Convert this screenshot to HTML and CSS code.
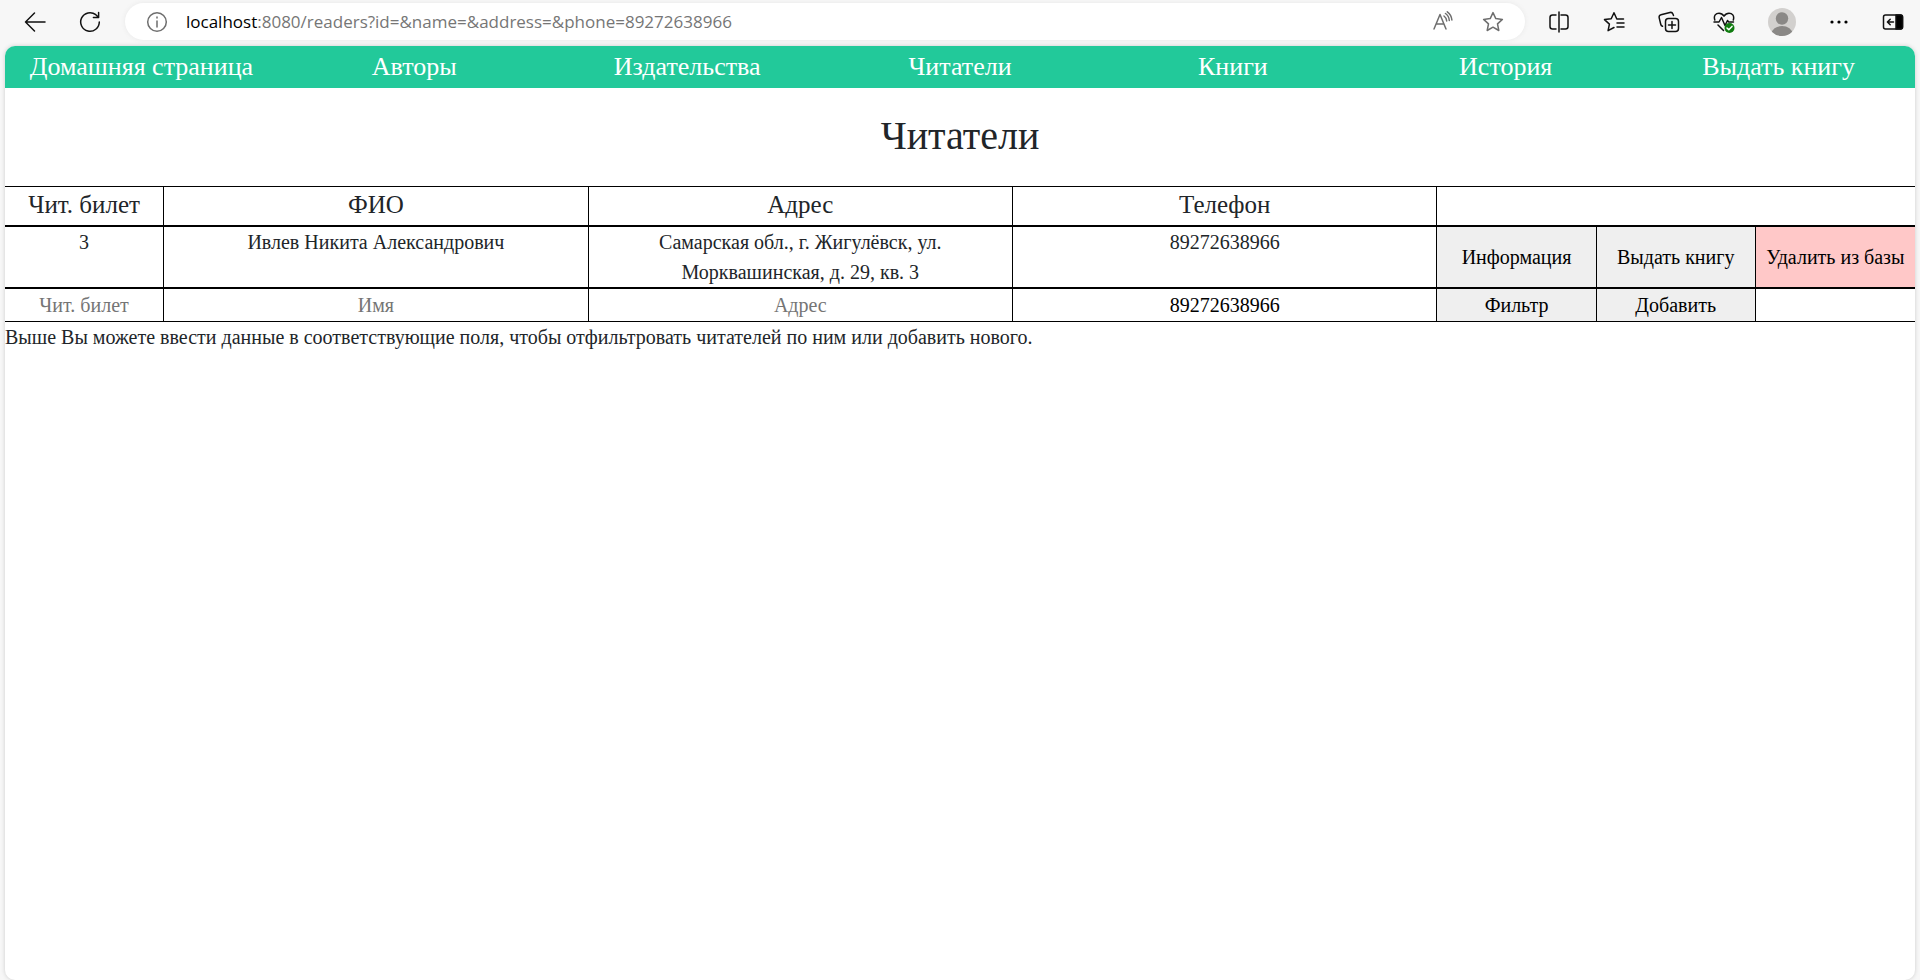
FILE: index.html
```html
<!DOCTYPE html>
<html lang="ru">
<head>
<meta charset="utf-8">
<title>Читатели</title>
<link rel="stylesheet" href="styles.css">
</head>
<body>
<header class="toolbar">
  <button class="tool tool-nav" type="button" aria-label="Назад">
    <svg class="icon" width="22" height="22" viewBox="0 0 22 22"><path d="M21 11H1.5M10.5 2L1.5 11l9 9"/></svg>
  </button>
  <button class="tool tool-nav" type="button" aria-label="Обновить">
    <svg class="icon" width="22" height="22" viewBox="0 0 22 22"><path d="M20.3 11A9.3 9.3 0 1 1 16.8 3.7L19.5 6.2M19.6 1.5V6.4H14.4"/></svg>
  </button>
  <form class="address">
    <button class="address-btn address-info" type="button" aria-label="Сведения о сайте">
      <svg class="icon icon-gray" width="22" height="22" viewBox="0 0 22 22"><circle cx="11" cy="11" r="9.3"/><path d="M11 10v6M11 6v1"/></svg>
    </button>
    <label class="address-host" for="url">localhost</label>
    <input class="address-url" id="url" type="text" value=":8080/readers?id=&amp;name=&amp;address=&amp;phone=89272638966">
    <button class="address-btn" type="button" aria-label="Прочесть вслух">
      <svg class="icon icon-gray" width="22" height="22" viewBox="0 0 22 22"><path d="M2 18L8 3.5 14 18M4.2 13h7.6M12 5c1.8 1.300 2.600 3 2.700 5M13.500 2.500c2.300 1.600 3.600 4 3.800 7M15.300.8c2.800 2 4.300 4.800 4.600 8.200"/></svg>
    </button>
    <button class="address-btn" type="button" aria-label="Добавить в избранное">
      <svg class="icon icon-gray" width="22" height="22" viewBox="0 0 22 22"><path d="M11 1.600l2.800 6 6.600.8-4.900 4.500 1.300 6.600-5.800-3.300-5.800 3.300 1.300-6.600L1.600 8.400l6.600-.8z"/></svg>
    </button>
  </form>
  <div class="tools">
    <button class="tool" type="button" aria-label="Разделить экран">
      <svg class="icon" width="22" height="22" viewBox="0 0 22 22"><path d="M8 4H4.500a2.500 2.500 0 0 0-2.500 2.500v9A2.500 2.500 0 0 0 4.500 18H8M13 4h4.500A2.500 2.500 0 0 1 20 6.500v9a2.500 2.500 0 0 1-2.500 2.500H13M11 1v20"/></svg>
    </button>
    <button class="tool" type="button" aria-label="Избранное">
      <svg class="icon" width="22" height="22" viewBox="0 0 22 22"><path d="M20.500 8h-6.700L11 1.800 8.200 7.800 1.500 8.600l4.900 4.500-1.300 6.600L11 16.500M14 12h7M14 16h7"/></svg>
    </button>
    <button class="tool" type="button" aria-label="Коллекции">
      <svg class="icon" width="22" height="22" viewBox="0 0 22 22"><rect x="7.500" y="7.500" width="13" height="13" rx="3"/><path d="M14 10.500v7M10.500 14h7M15.500 4.500l-.6-1.500a2.500 2.500 0 0 0-3-1.500L3 3.800a2.500 2.500 0 0 0-1.800 3l1.600 6.700a2.500 2.500 0 0 0 1.700 1.800"/></svg>
    </button>
    <button class="tool" type="button" aria-label="Производительность браузера">
      <svg class="icon" width="22" height="22" viewBox="0 0 22 22"><path d="M1.800 9C.3 4.500 3 2.200 6 2.200c2.300 0 4 1.500 5 3 1-1.500 2.700-3 5-3 3 0 5.700 2.300 4.300 6.800M1 11h5l2.500-4.500 3.500 8 2.500-5 1.200 1.500h4.800M5 14l5.500 5.500"/><circle class="badge" cx="16.500" cy="17" r="5"/><path class="badge-tick" d="M14 17l1.800 1.800 3.200-3.400"/></svg>
    </button>
    <button class="tool tool-avatar" type="button" aria-label="Профиль">
      <svg width="28" height="28" viewBox="0 0 28 28"><defs><clipPath id="face"><circle cx="14" cy="14" r="14"/></clipPath></defs><circle cx="14" cy="14" r="14" fill="#d2d0ce"/><g clip-path="url(#face)" fill="#8a8886"><circle cx="14" cy="10.500" r="6.200"/><ellipse cx="14" cy="26" rx="10.500" ry="8"/></g></svg>
    </button>
    <button class="tool tool-more" type="button" aria-label="Параметры">
      <svg width="22" height="22" viewBox="0 0 22 22"><circle cx="4" cy="11" r="1.600"/><circle cx="11" cy="11" r="1.600"/><circle cx="18" cy="11" r="1.600"/></svg>
    </button>
    <button class="tool" type="button" aria-label="Боковая панель">
      <svg class="icon" width="22" height="22" viewBox="0 0 22 22"><rect x="1.500" y="4" width="19" height="14" rx="2"/><path d="M14 4h4.500a2 2 0 0 1 2 2v10a2 2 0 0 1-2 2H14z" fill="#000"/><path d="M11.500 11H5.500M8.200 8.200L5.400 11l2.800 2.800"/></svg>
    </button>
  </div>
</header>

<div class="page">
  <nav class="menu">
    <a class="menu-link" href="#">Домашняя страница</a>
    <a class="menu-link" href="#">Авторы</a>
    <a class="menu-link" href="#">Издательства</a>
    <a class="menu-link" href="#">Читатели</a>
    <a class="menu-link" href="#">Книги</a>
    <a class="menu-link" href="#">История</a>
    <a class="menu-link" href="#">Выдать книгу</a>
  </nav>
  <main>
    <h1 class="title">Читатели</h1>
    <table class="readers">
      <colgroup>
        <col class="col-small">
        <col class="col-wide" span="3">
        <col class="col-small" span="3">
      </colgroup>
      <thead>
        <tr>
          <th>Чит. билет</th>
          <th>ФИО</th>
          <th>Адрес</th>
          <th>Телефон</th>
          <th colspan="3"></th>
        </tr>
      </thead>
      <tbody>
        <tr>
          <td>3</td>
          <td>Ивлев Никита Александрович</td>
          <td class="cell-address">Самарская обл., г. Жигулёвск, ул. Морквашинская, д. 29, кв. 3</td>
          <td>89272638966</td>
          <td class="cell-action"><button class="action" type="button">Информация</button></td>
          <td class="cell-action"><button class="action" type="button">Выдать книгу</button></td>
          <td class="cell-action cell-delete"><button class="action" type="button">Удалить из базы</button></td>
        </tr>
      </tbody>
      <tfoot>
        <tr>
          <td><input class="field" type="text" placeholder="Чит. билет" aria-label="Чит. билет"></td>
          <td><input class="field" type="text" placeholder="Имя" aria-label="Имя"></td>
          <td><input class="field" type="text" placeholder="Адрес" aria-label="Адрес"></td>
          <td><input class="field" type="text" value="89272638966" aria-label="Телефон"></td>
          <td class="cell-action"><button class="action" type="submit">Фильтр</button></td>
          <td class="cell-action"><button class="action" type="submit">Добавить</button></td>
          <td></td>
        </tr>
      </tfoot>
    </table>
    <p class="hint">Выше Вы можете ввести данные в соответствующие поля, чтобы отфильтровать читателей по ним или добавить нового.</p>
  </main>
</div>
</body>
</html>
```
FILE: styles.css
```css
* {
  box-sizing: border-box;
}

body {
  display: flex;
  flex-direction: column;
  min-height: 100vh;
  margin: 0;
  background: #f7f7f7;
  color: #212529;
  font: 20px/30px "Liberation Serif", "Times New Roman", serif;
}

button,
input {
  margin: 0;
  padding: 0;
  border: 0;
  font: inherit;
}

.toolbar {
  display: flex;
  align-items: center;
  height: 46px;
  padding: 0 0 3px 7px;
}

.tool {
  display: flex;
  align-items: center;
  justify-content: center;
  width: 55px;
  height: 40px;
  background: none;
}

.tool-avatar {
  width: 62px;
}

.tool-more {
  width: 52px;
}

.tools {
  display: flex;
  margin-left: 6px;
}

.icon {
  fill: none;
  stroke: #111;
  stroke-width: 1.5;
  stroke-linecap: round;
  stroke-linejoin: round;
}

.icon-gray {
  stroke: #6e6e6e;
}

.icon .badge {
  fill: #107c10;
  stroke: none;
}

.icon .badge-tick {
  stroke: #fff;
}

.address {
  display: flex;
  flex: 1;
  align-items: center;
  height: 37px;
  margin-left: 8px;
  padding: 0 7px;
  border-radius: 19px;
  background: #fff;
  box-shadow: 0 0 5px #e8e8e8;
  font: 17px/24px "Open Sans", "Noto Sans", sans-serif;
}

.address-btn {
  display: flex;
  align-items: center;
  justify-content: center;
  width: 50px;
  height: 36px;
  background: none;
}

.address-info {
  margin-right: 4px;
}

.address-host {
  color: #000;
}

.address-url {
  flex: 1;
  min-width: 0;
  background: none;
  color: #767676;
}

.page {
  flex: 1;
  margin: 0 5px;
  overflow: hidden;
  border-radius: 10px;
  background: #fff;
  box-shadow: 0 0 4px #ccc;
}

.menu {
  display: grid;
  grid-template-columns: repeat(7, 1fr);
  padding: 2px 0;
  background: #22c99a;
  font-size: 26px;
  line-height: 38px;
  text-align: center;
}

.menu-link {
  color: #fff;
  text-decoration: none;
}

.title {
  margin: 0;
  padding: 24px 0 26px;
  font-size: 40px;
  font-weight: 400;
  line-height: 48px;
  text-align: center;
}

.readers {
  width: 100%;
  table-layout: fixed;
  border-collapse: separate;
  border-spacing: 0;
  text-align: center;
}

.col-small {
  width: 8.3333%;
}

.col-wide {
  width: 22.2222%;
}

.readers th,
.readers td {
  height: 1px;
  padding: 0;
  border-right: 1px solid #000;
  border-bottom: 2px solid #000;
  vertical-align: top;
}

.readers th {
  padding-bottom: 2px;
  border-top: 1px solid #000;
  font-size: 25px;
  font-weight: 400;
  line-height: 36px;
}

.readers tfoot td {
  border-bottom-width: 1px;
}

.readers th:last-child,
.readers td:last-child {
  border-right: 0;
}

.readers .cell-address {
  padding: 0 60px;
}

.readers .cell-action {
  background: #efefef;
  vertical-align: middle;
}

.readers .cell-delete {
  background: #ffc8c8;
}

.action {
  display: block;
  width: 100%;
  height: 100%;
  background: none;
  color: #000;
}

.field {
  display: block;
  width: 100%;
  height: 32px;
  background: none;
  color: #000;
  text-align: center;
}

.field::placeholder {
  color: #757575;
}

.hint {
  margin: 0;
}
```
